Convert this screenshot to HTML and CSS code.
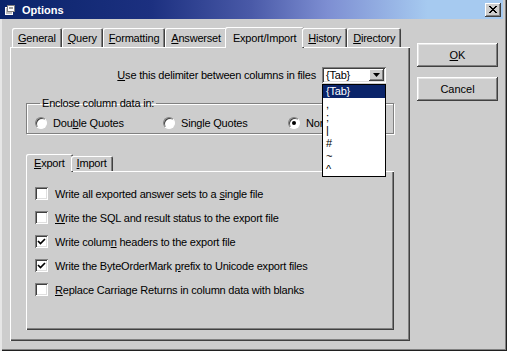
FILE: index.html
```html
<!DOCTYPE html>
<html lang="en">
<head>
  <meta charset="UTF-8" />
  <title>Options</title>
  <link rel="stylesheet" href="styles.css">
</head>
<body>
  <div class="window">
    <div class="titlebar">
      <span class="app-icon">
        <svg width="11" height="10" viewBox="0 0 11 10">
          <rect x="0.5" y="2.5" width="7" height="7" fill="#c0c0c0" stroke="#fff"/>
          <rect x="2.5" y="0.5" width="7" height="6" fill="#fff" stroke="#808080"/>
          <line x1="4" y1="3" x2="8" y2="3" stroke="#404040"/>
        </svg>
      </span>
      <span class="title">Options</span>
      <span class="close">
        <svg width="8" height="7" viewBox="0 0 8 7"><path d="M0 0 L7 7 M1 0 L8 7 M7 0 L0 7 M8 0 L1 7" stroke="#000" stroke-width="1"/></svg>
      </span>
    </div>

    <div class="main">
      <div class="tabbox">
        <div class="tabs">
          <div class="tab"><u>G</u>eneral</div>
          <div class="tab"><u>Q</u>uery</div>
          <div class="tab"><u>F</u>ormatting</div>
          <div class="tab"><u>A</u>nswerset</div>
          <div class="tab active">Export/Import</div>
          <div class="tab"><u>H</u>istory</div>
          <div class="tab"><u>D</u>irectory</div>
        </div>

        <div class="panel">
          <div class="delim-row">
            <span class="delim-label"><u>U</u>se this delimiter between columns in files</span>
            <div class="combo">
              <span class="combo-text">{Tab}</span>
              <span class="combo-btn">
                <svg width="7" height="4" viewBox="0 0 7 4"><path d="M0 0 H7 L3.5 4 Z" fill="#000"/></svg>
              </span>
              <ul class="droplist">
                <li class="selected">{Tab}</li>
                <li>,</li>
                <li>;</li>
                <li>|</li>
                <li>#</li>
                <li>~</li>
                <li>^</li>
              </ul>
            </div>
          </div>

          <fieldset class="group">
            <legend>Enclose column data in:</legend>
            <div class="radios">
              <div class="radio-item"><span class="radio"></span><span>Dou<u>b</u>le Quotes</span></div>
              <div class="radio-item"><span class="radio"></span><span>Single Quotes</span></div>
              <div class="radio-item"><span class="radio on"></span><span>None</span></div>
            </div>
          </fieldset>

          <div class="subtabs">
            <div class="tab active"><u>E</u>xport</div>
            <div class="tab"><u>I</u>mport</div>
          </div>
          <div class="subpanel">
            <div class="check-row"><span class="check"></span><span>Write all exported answer sets to a <u>s</u>ingle file</span></div>
            <div class="check-row"><span class="check"></span><span><u>W</u>rite the SQL and result status to the export file</span></div>
            <div class="check-row"><span class="check on"><svg width="9" height="9" viewBox="0 0 9 9"><path d="M1 4 L3.5 6.5 L8 2" fill="none" stroke="#000" stroke-width="1.7"/></svg></span><span>Write colum<u>n</u> headers to the export file</span></div>
            <div class="check-row"><span class="check on"><svg width="9" height="9" viewBox="0 0 9 9"><path d="M1 4 L3.5 6.5 L8 2" fill="none" stroke="#000" stroke-width="1.7"/></svg></span><span>Write the ByteOrderMark <u>p</u>refix to Unicode export files</span></div>
            <div class="check-row"><span class="check"></span><span><u>R</u>eplace Carriage Returns in column data with blanks</span></div>
          </div>
        </div>
      </div>

      <div class="buttons">
        <button class="btn"><u>O</u>K</button>
        <button class="btn">Cancel</button>
      </div>
    </div>
  </div>
</body>
</html>
```

FILE: styles.css
```css
body { margin: 0; background: #cdcdcd; font-family: "Liberation Sans", Arial, sans-serif; font-size: 11px; letter-spacing: -0.2px; color: #000; }
u { text-decoration: underline; text-underline-offset: 1px; }

.window { width: 507px; height: 351px; box-sizing: border-box; background: #cdcdcd;
  box-shadow: inset 2px 0 #e6e6e6, inset -1px -1px #202020, inset -2px -2px #808080; }

.titlebar { width: 503px; height: 19px; display: flex; align-items: center;
  background: linear-gradient(to right, #0a246a 0%, #1c3080 30%, #4a5aa8 50%, #7d8ed2 65%, #a6caf0 85%, #a6caf0 100%); }
.app-icon { display: flex; margin: 1px 6px 0 5px; }
.title { color: #fff; font-weight: bold; font-size: 11px; letter-spacing: 0; }
.close { margin-left: auto; margin-right: 2px; width: 16px; height: 14px; display: flex; align-items: center; justify-content: center;
  background: #cdcdcd; box-shadow: inset -1px -1px #404040, inset 1px 1px #fff, inset -2px -2px #808080; }

.main { display: flex; padding: 7px 0 0 10px; }
.tabbox { width: 400px; }

.tabs, .subtabs { display: flex; align-items: flex-end; padding-left: 2px; position: relative; z-index: 1; }
.tabs { height: 21px; }
.subtabs { height: 17px; margin-top: 20px; }
.tab { height: 19px; box-sizing: border-box; padding: 4px 6px 0 6px; line-height: 13px; background: #cdcdcd;
  border-radius: 2px 2px 0 0; box-shadow: inset 1px 1px #fff, inset -1px 0 #404040, inset -2px 0 #808080; }
.subtabs .tab { height: 15px; padding-top: 1px; }
.tab.active { height: 21px; margin: 0 -2px -1px -2px; padding-top: 5px; padding-left: 8px; padding-right: 8px; }
.subtabs .tab.active { height: 18px; padding-top: 3px; }

.panel { height: 294px; box-sizing: border-box; padding: 0 16px; display: flex; flex-direction: column;
  box-shadow: inset 1px 1px #fff, inset -1px -1px #404040, inset -2px -2px #808080; }

.delim-row { display: flex; justify-content: flex-end; align-items: center; gap: 6px; margin-top: 20px; height: 16px; padding-right: 8px; }
.combo { position: relative; width: 64px; height: 16px; box-sizing: border-box; background: #fff; display: flex; align-items: center;
  box-shadow: inset 1px 1px #808080, inset -1px -1px #fff, inset 2px 2px #404040, inset -2px -2px #dfdfdf; }
.combo-text { padding-left: 4px; }
.combo-btn { margin-left: auto; margin-right: 2px; width: 15px; height: 12px; display: flex; align-items: center; justify-content: center;
  background: #cdcdcd; box-shadow: inset -1px -1px #404040, inset 1px 1px #fff, inset -2px -2px #808080; }
.droplist { position: absolute; left: 0; top: 17px; width: 64px; box-sizing: border-box; margin: 0; padding: 0; list-style: none;
  background: #fff; border: 1px solid #000; z-index: 5; }
.droplist li { height: 13px; line-height: 13px; padding-left: 3px; }
.droplist li.selected { background: #0a246a; color: #fff; }

.group { margin: 14px 0 0 0; padding: 6px 0 4px 8px; border: 1px solid #808080; box-shadow: 1px 1px #fff, inset 1px 1px #fff; }
.group legend { margin-left: 5px; padding: 0 2px; line-height: 13px; }
.radios { display: grid; grid-template-columns: 128px 125px auto; height: 13px; align-items: center; }
.radio-item { display: flex; align-items: center; gap: 6px; }
.radio { width: 12px; height: 12px; box-sizing: border-box; border-radius: 50%; background: #fff; position: relative;
  border: 1px solid; border-color: #808080 #fff #fff #808080; box-shadow: inset 1px 1px #404040; }
.radio.on::after { content: ""; position: absolute; left: 3px; top: 3px; width: 4px; height: 4px; border-radius: 50%; background: #000; }

.subpanel { height: 159px; box-sizing: border-box; padding: 16px 0 0 9px; display: flex; flex-direction: column; gap: 11px;
  box-shadow: inset 1px 1px #fff, inset -1px -1px #404040, inset -2px -2px #808080; }
.check-row { display: flex; align-items: center; gap: 7px; height: 13px; }
.check { width: 13px; height: 13px; box-sizing: border-box; background: #fff; display: flex; align-items: center; justify-content: center;
  box-shadow: inset 1px 1px #808080, inset -1px -1px #fff, inset 2px 2px #404040, inset -2px -2px #dfdfdf; }

.buttons { display: flex; flex-direction: column; gap: 10px; margin: 17px 0 0 7px; }
.btn { width: 81px; height: 24px; padding: 0; border: none; font: inherit; color: #000; background: #cdcdcd;
  box-shadow: inset -1px -1px #404040, inset 1px 1px #fff, inset -2px -2px #808080, inset 2px 2px #e6e6e6; }
```
